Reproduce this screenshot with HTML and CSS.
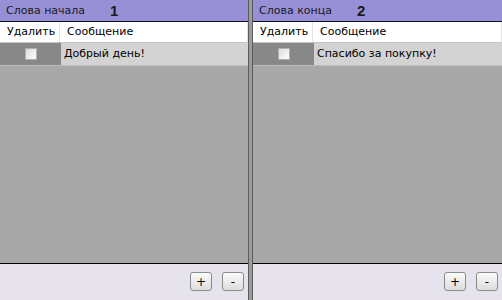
FILE: index.html
```html
<!DOCTYPE html>
<html lang="ru">
<head>
    <meta charset="UTF-8">
    <title>Слова начала и конца</title>
    <link rel="stylesheet" href="styles.css">
</head>
<body>
    <div class="panels">
        <div class="panel panel-left">
            <div class="panel-title">
                <span>Слова начала</span>
                <span class="panel-num">1</span>
            </div>
            <div class="grid-head">
                <div class="col-del">Удалить</div>
                <div class="col-msg">Сообщение</div>
            </div>
            <div class="grid-row">
                <div class="cell-del"><span class="check"></span></div>
                <div class="cell-msg">Добрый день!</div>
            </div>
            <div class="grid-fill"></div>
            <div class="panel-foot">
                <button class="btn">+</button>
                <button class="btn">-</button>
            </div>
        </div>

        <div class="divider"></div>

        <div class="panel panel-right">
            <div class="panel-title">
                <span>Слова конца</span>
                <span class="panel-num">2</span>
            </div>
            <div class="grid-head">
                <div class="col-del">Удалить</div>
                <div class="col-msg">Сообщение</div>
            </div>
            <div class="grid-row">
                <div class="cell-del"><span class="check"></span></div>
                <div class="cell-msg">Спасибо за покупку!</div>
            </div>
            <div class="grid-fill"></div>
            <div class="panel-foot">
                <button class="btn">+</button>
                <button class="btn">-</button>
            </div>
        </div>
    </div>
</body>
</html>
```

FILE: styles.css
```css
body {
    margin: 0;
    font-family: 'DejaVu Sans', Verdana, sans-serif;
    font-size: 11px;
    color: #000000;
    background: #e6e3ec;
    overflow: hidden;
}

.panels {
    display: flex;
    width: 502px;
    height: 300px;
}

.panel {
    display: flex;
    flex-direction: column;
    height: 300px;
}

.panel-left {
    width: 248px;
}

.panel-right {
    width: 249px;
}

/* Vertical splitter between the two lists */
.divider {
    width: 3px;
    background: #9c9c9c;
    border-left: 1px solid #5a5a5a;
    border-right: 1px solid #5a5a5a;
}

.panel-title {
    display: flex;
    align-items: center;
    height: 21px;
    padding-left: 6px;
    background: #9890d6;
    border-bottom: 1px solid #111111;
    color: #1a1a1a;
}

.panel-num {
    margin-left: 25px;
    font-size: 15px;
    font-weight: bold;
    font-family: 'Liberation Sans', Arial, sans-serif;
}

.grid-head {
    display: flex;
    height: 20px;
    background: #ffffff;
    border-bottom: 1px solid #c4c4c4;
    border-right: 1px solid #e0e0e0;
}

.col-del {
    width: 60px;
    padding-left: 7px;
    box-sizing: border-box;
    line-height: 20px;
    border-right: 1px solid #e4e4e4;
}

.col-msg {
    padding-left: 7px;
    line-height: 20px;
}

.grid-row {
    display: flex;
    height: 22px;
    border-bottom: 1px solid #bdbdbd;
}

.cell-del {
    width: 61px;
    display: flex;
    align-items: center;
    justify-content: center;
    background: #888888;
}

.check {
    width: 10px;
    height: 10px;
    border: 1px solid #b0b0b0;
    background: linear-gradient(135deg, #dcdcdc, #ffffff);
}

.cell-msg {
    flex: 1;
    padding-left: 3px;
    line-height: 22px;
    background: #d3d3d3;
}

.grid-fill {
    flex: 1;
    background: #a8a8a8;
    border-bottom: 1px solid #000000;
}

.panel-foot {
    display: flex;
    justify-content: flex-end;
    gap: 10px;
    height: 36px;
    box-sizing: border-box;
    padding: 8px 4px 0 0;
    background: #e6e3ec;
}

.btn {
    width: 22px;
    height: 19px;
    padding: 0;
    border: 1px solid #8a8a8a;
    border-radius: 3px;
    background: linear-gradient(#fbfbfb, #dcdcdc);
    font-family: 'DejaVu Sans', Verdana, sans-serif;
    font-size: 12px;
    line-height: 16px;
    color: #000000;
}
```
